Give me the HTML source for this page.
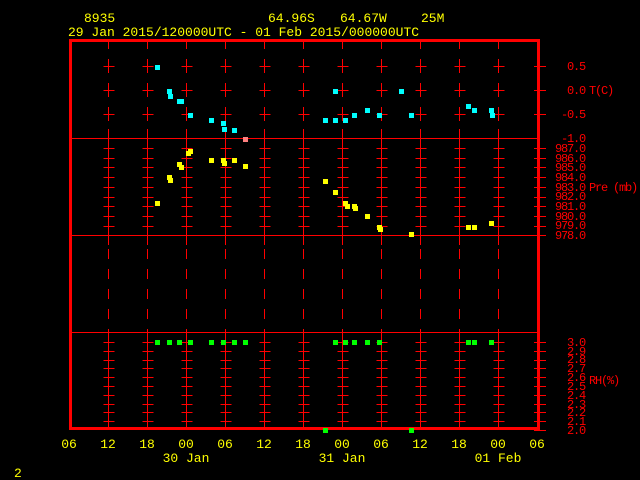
<!DOCTYPE html>
<html><head><meta charset="utf-8"><style>
body{margin:0;background:#000;width:640px;height:480px;overflow:hidden}
svg{display:block}
text{font-family:"Liberation Mono",monospace;font-size:13px}
.y{fill:#ffff00}.r{fill:#ff0000}
.sm text,text.sm{font-size:12px;letter-spacing:-1.2px}
</style></head><body>
<svg id="s" width="640" height="480" xmlns="http://www.w3.org/2000/svg">
<rect width="640" height="480" fill="#000"/>
<g id="grid" stroke="#ff0000" stroke-width="1"></g>
<g fill="none" stroke="#ff0000">
<rect x="70.5" y="40.5" width="468" height="388" stroke-width="3"/>
<line x1="70" y1="138.5" x2="540" y2="138.5" stroke-width="1"/>
<line x1="70" y1="235.5" x2="540" y2="235.5" stroke-width="1"/>
<line x1="70" y1="332.5" x2="540" y2="332.5" stroke-width="1"/>
</g>
<g id="pts"></g>
<text class="y" x="84" y="22">8935</text>
<text class="y" x="268" y="22">64.96S</text>
<text class="y" x="340" y="22">64.67W</text>
<text class="y" x="421" y="22">25M</text>
<text class="y" x="68" y="36">29 Jan 2015/120000UTC - 01 Feb 2015/000000UTC</text>
<g class="r sm" text-anchor="end">
<text x="585" y="70">0.5</text><text x="585" y="94">0.0</text><text x="585" y="118">-0.5</text><text x="585" y="142">-1.0</text>
<text x="585" y="152">987.0</text><text x="585" y="162">986.0</text><text x="585" y="171">985.0</text><text x="585" y="181">984.0</text><text x="585" y="191">983.0</text><text x="585" y="200">982.0</text><text x="585" y="210">981.0</text><text x="585" y="220">980.0</text><text x="585" y="229">979.0</text><text x="585" y="239">978.0</text>
<text x="585" y="346">3.0</text><text x="585" y="355">2.9</text><text x="585" y="363">2.8</text><text x="585" y="372">2.7</text><text x="585" y="381">2.6</text><text x="585" y="390">2.5</text><text x="585" y="399">2.4</text><text x="585" y="408">2.3</text><text x="585" y="416">2.2</text><text x="585" y="425">2.1</text><text x="585" y="434">2.0</text>
</g>
<text class="r sm" x="589" y="94">T(C)</text>
<text class="r sm" x="589" y="191">Pre (mb)</text>
<text class="r sm" x="589" y="384">RH(%)</text>
<g class="y" text-anchor="middle">
<text x="69" y="448">06</text><text x="108" y="448">12</text><text x="147" y="448">18</text><text x="186" y="448">00</text><text x="225" y="448">06</text><text x="264" y="448">12</text><text x="303" y="448">18</text><text x="342" y="448">00</text><text x="381" y="448">06</text><text x="420" y="448">12</text><text x="459" y="448">18</text><text x="498" y="448">00</text><text x="537" y="448">06</text>
<text x="186" y="462">30 Jan</text><text x="342" y="462">31 Jan</text><text x="498" y="462">01 Feb</text>
</g>
<text class="y" x="14" y="477">2</text>
</svg>
<script>
var ns="http://www.w3.org/2000/svg",g=document.getElementById('grid'),p=document.getElementById('pts');
function L(a,b,c,d){var e=document.createElementNS(ns,'line');e.setAttribute('x1',a);e.setAttribute('y1',b);e.setAttribute('x2',c);e.setAttribute('y2',d);g.appendChild(e);}
var ticks=[66,90,114];
for(var i=0;i<10;i++)ticks.push(148+i*9.7);
for(var i=0;i<10;i++)ticks.push(342+i*8.8);
var rt=[66,90,114];for(var i=0;i<10;i++)rt.push(148+i*9.7);for(var i=0;i<11;i++)rt.push(342+i*8.8);
for(var k=0;k<rt.length;k++)L(534,Math.round(rt[k])+.5,546,Math.round(rt[k])+.5);
for(var i=1;i<=11;i++){var x=69+39*i+.5;
 L(x,40,x,49);L(x,129,x,148);
 for(var k=0;k<ticks.length;k++){var y=Math.round(ticks[k]);L(x,y-7,x,y+7);L(x-5,y+.5,x+6,y+.5);}
 L(x,226,x,245);
 for(var y=249;y<330;y+=20)L(x,y,x,y+10);
 L(x,332,x,342);L(x,420,x,428);
}
function P(c,arr){arr.forEach(function(a){var r=document.createElementNS(ns,'rect');r.setAttribute('x',a[0]-2);r.setAttribute('y',a[1]-2);r.setAttribute('width',5);r.setAttribute('height',5);r.setAttribute('fill',c);p.appendChild(r);});}
P('#00ffff',[[157,67],[169,91],[170,96],[179,101],[181,101],[190,115],[211,120],[223,123],[224,129],[234,130],[335,91],[325,120],[335,120],[345,120],[354,115],[367,110],[379,115],[401,91],[411,115],[468,106],[474,110],[491,110],[492,115]]);
P('#ff8080',[[245,139]]);
P('#ffff00',[[157,203],[169,177],[170,180],[179,164],[181,167],[188,153],[190,151],[211,160],[223,160],[224,163],[234,160],[245,166],[325,181],[335,192],[345,203],[347,206],[354,206],[355,208],[367,216],[379,227],[380,229],[411,234],[468,227],[474,227],[491,223]]);
P('#00ff00',[[157,342],[169,342],[179,342],[190,342],[211,342],[223,342],[234,342],[245,342],[335,342],[345,342],[354,342],[367,342],[379,342],[468,342],[474,342],[491,342],[325,430],[411,430]]);
</script>
</body></html>
